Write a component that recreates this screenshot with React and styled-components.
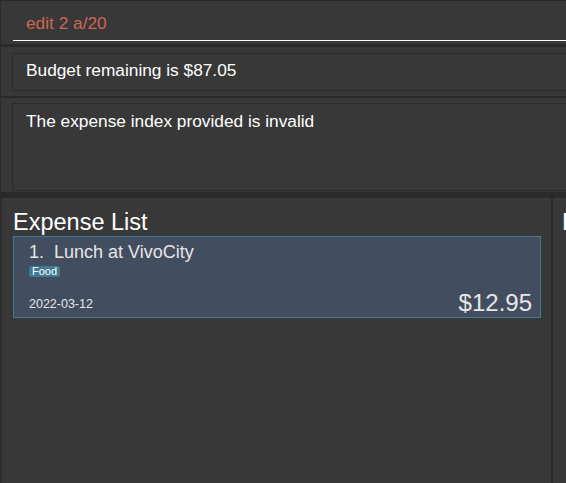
import React from "react";
import styled, { createGlobalStyle } from "styled-components";

const Global = createGlobalStyle`
  html, body { margin: 0; padding: 0; background: #383838; overflow: hidden; }
  body { width: 566px; height: 483px; }
  #root { width: 566px; height: 483px; overflow: hidden; }
  * { box-sizing: border-box; }
`;

const Page = styled.div`
  width: 820px;
  height: 483px;
  display: flex;
  flex-direction: column;
  background: #383838;
  border-top: 1px solid #292929;
  border-left: 1px solid #2c2c2c;
  font-family: "Liberation Sans", Arial, sans-serif;
`;

const CommandSection = styled.div`
  height: 43px;
  padding-left: 12px;
`;

const CommandInput = styled.div`
  height: 40px;
  padding: 12px 0 0 13px;
  border-bottom: 1px solid #ffffff;
  color: #d06651;
  font-size: 17.3px;
  line-height: 20px;
`;

const Band = styled.div`
  height: ${(p) => p.$h}px;
  flex: none;
  background: #2a2a2a;
`;

const ResultSection = styled.div`
  height: ${(p) => p.$h}px;
  flex: none;
  padding: ${(p) => p.$pt}px 0 0 11px;
`;

const ResultBox = styled.div`
  height: ${(p) => p.$h}px;
  border: 1px solid #2c2c2c;
  padding: ${(p) => p.$pt}px 0 0 13px;
  color: #ffffff;
  font-size: 17.3px;
  line-height: 20px;
`;

const Main = styled.div`
  flex: 1;
  display: flex;
  min-height: 0;
`;

const ListPanel = styled.div`
  width: 550px;
  flex: none;
  border-left: 1px solid #2c2c2c;
  padding: 11px 10px 0 11px;
`;

const Splitter = styled.div`
  width: 2px;
  flex: none;
  background: #292929;
`;

const SidePanel = styled.div`
  flex: 1;
  padding: 11px 0 0 9px;
`;

const Heading = styled.div`
  color: #ffffff;
  font-size: 23.5px;
  line-height: 27px;
  white-space: nowrap;
`;

const Card = styled.div`
  height: 82px;
  background: #424d5f;
  border: 1px solid #3e7b91;
  padding: 5px 8px 0 15px;
  display: flex;
  flex-direction: column;
  color: #e6e6e6;
`;

const Name = styled.div`
  font-size: 18px;
  line-height: 21px;
  white-space: pre;
`;

const Tags = styled.div`
  display: flex;
  margin-top: 3px;
`;

const Tag = styled.span`
  background: #3e7b91;
  color: #ffffff;
  font-size: 11px;
  line-height: 11px;
  height: 11px;
  padding: 0 3px;
  border-radius: 2px;
`;

const BottomRow = styled.div`
  margin-top: auto;
  display: flex;
  justify-content: space-between;
  align-items: flex-end;
`;

const DateText = styled.div`
  font-size: 12.5px;
  line-height: 15px;
  margin-bottom: 5px;
`;

const Price = styled.div`
  font-size: 24px;
  line-height: 28px;
`;

export default function App() {
  return (
    <>
      <Global />
      <Page>
        <CommandSection>
          <CommandInput>edit 2 a/20</CommandInput>
        </CommandSection>
        <Band $h={3} />
        <ResultSection $h={49} $pt={6}>
          <ResultBox $h={38} $pt={6}>Budget remaining is $87.05</ResultBox>
        </ResultSection>
        <Band $h={2} />
        <ResultSection $h={94} $pt={5}>
          <ResultBox $h={88} $pt={7}>The expense index provided is invalid</ResultBox>
        </ResultSection>
        <Band $h={6} />
        <Main>
          <ListPanel>
            <Heading>Expense List</Heading>
            <Card>
              <Name>{"1.  Lunch at VivoCity"}</Name>
              <Tags>
                <Tag>Food</Tag>
              </Tags>
              <BottomRow>
                <DateText>2022-03-12</DateText>
                <Price>$12.95</Price>
              </BottomRow>
            </Card>
          </ListPanel>
          <Splitter />
          <SidePanel>
            <Heading>Budget</Heading>
          </SidePanel>
        </Main>
      </Page>
    </>
  );
}
